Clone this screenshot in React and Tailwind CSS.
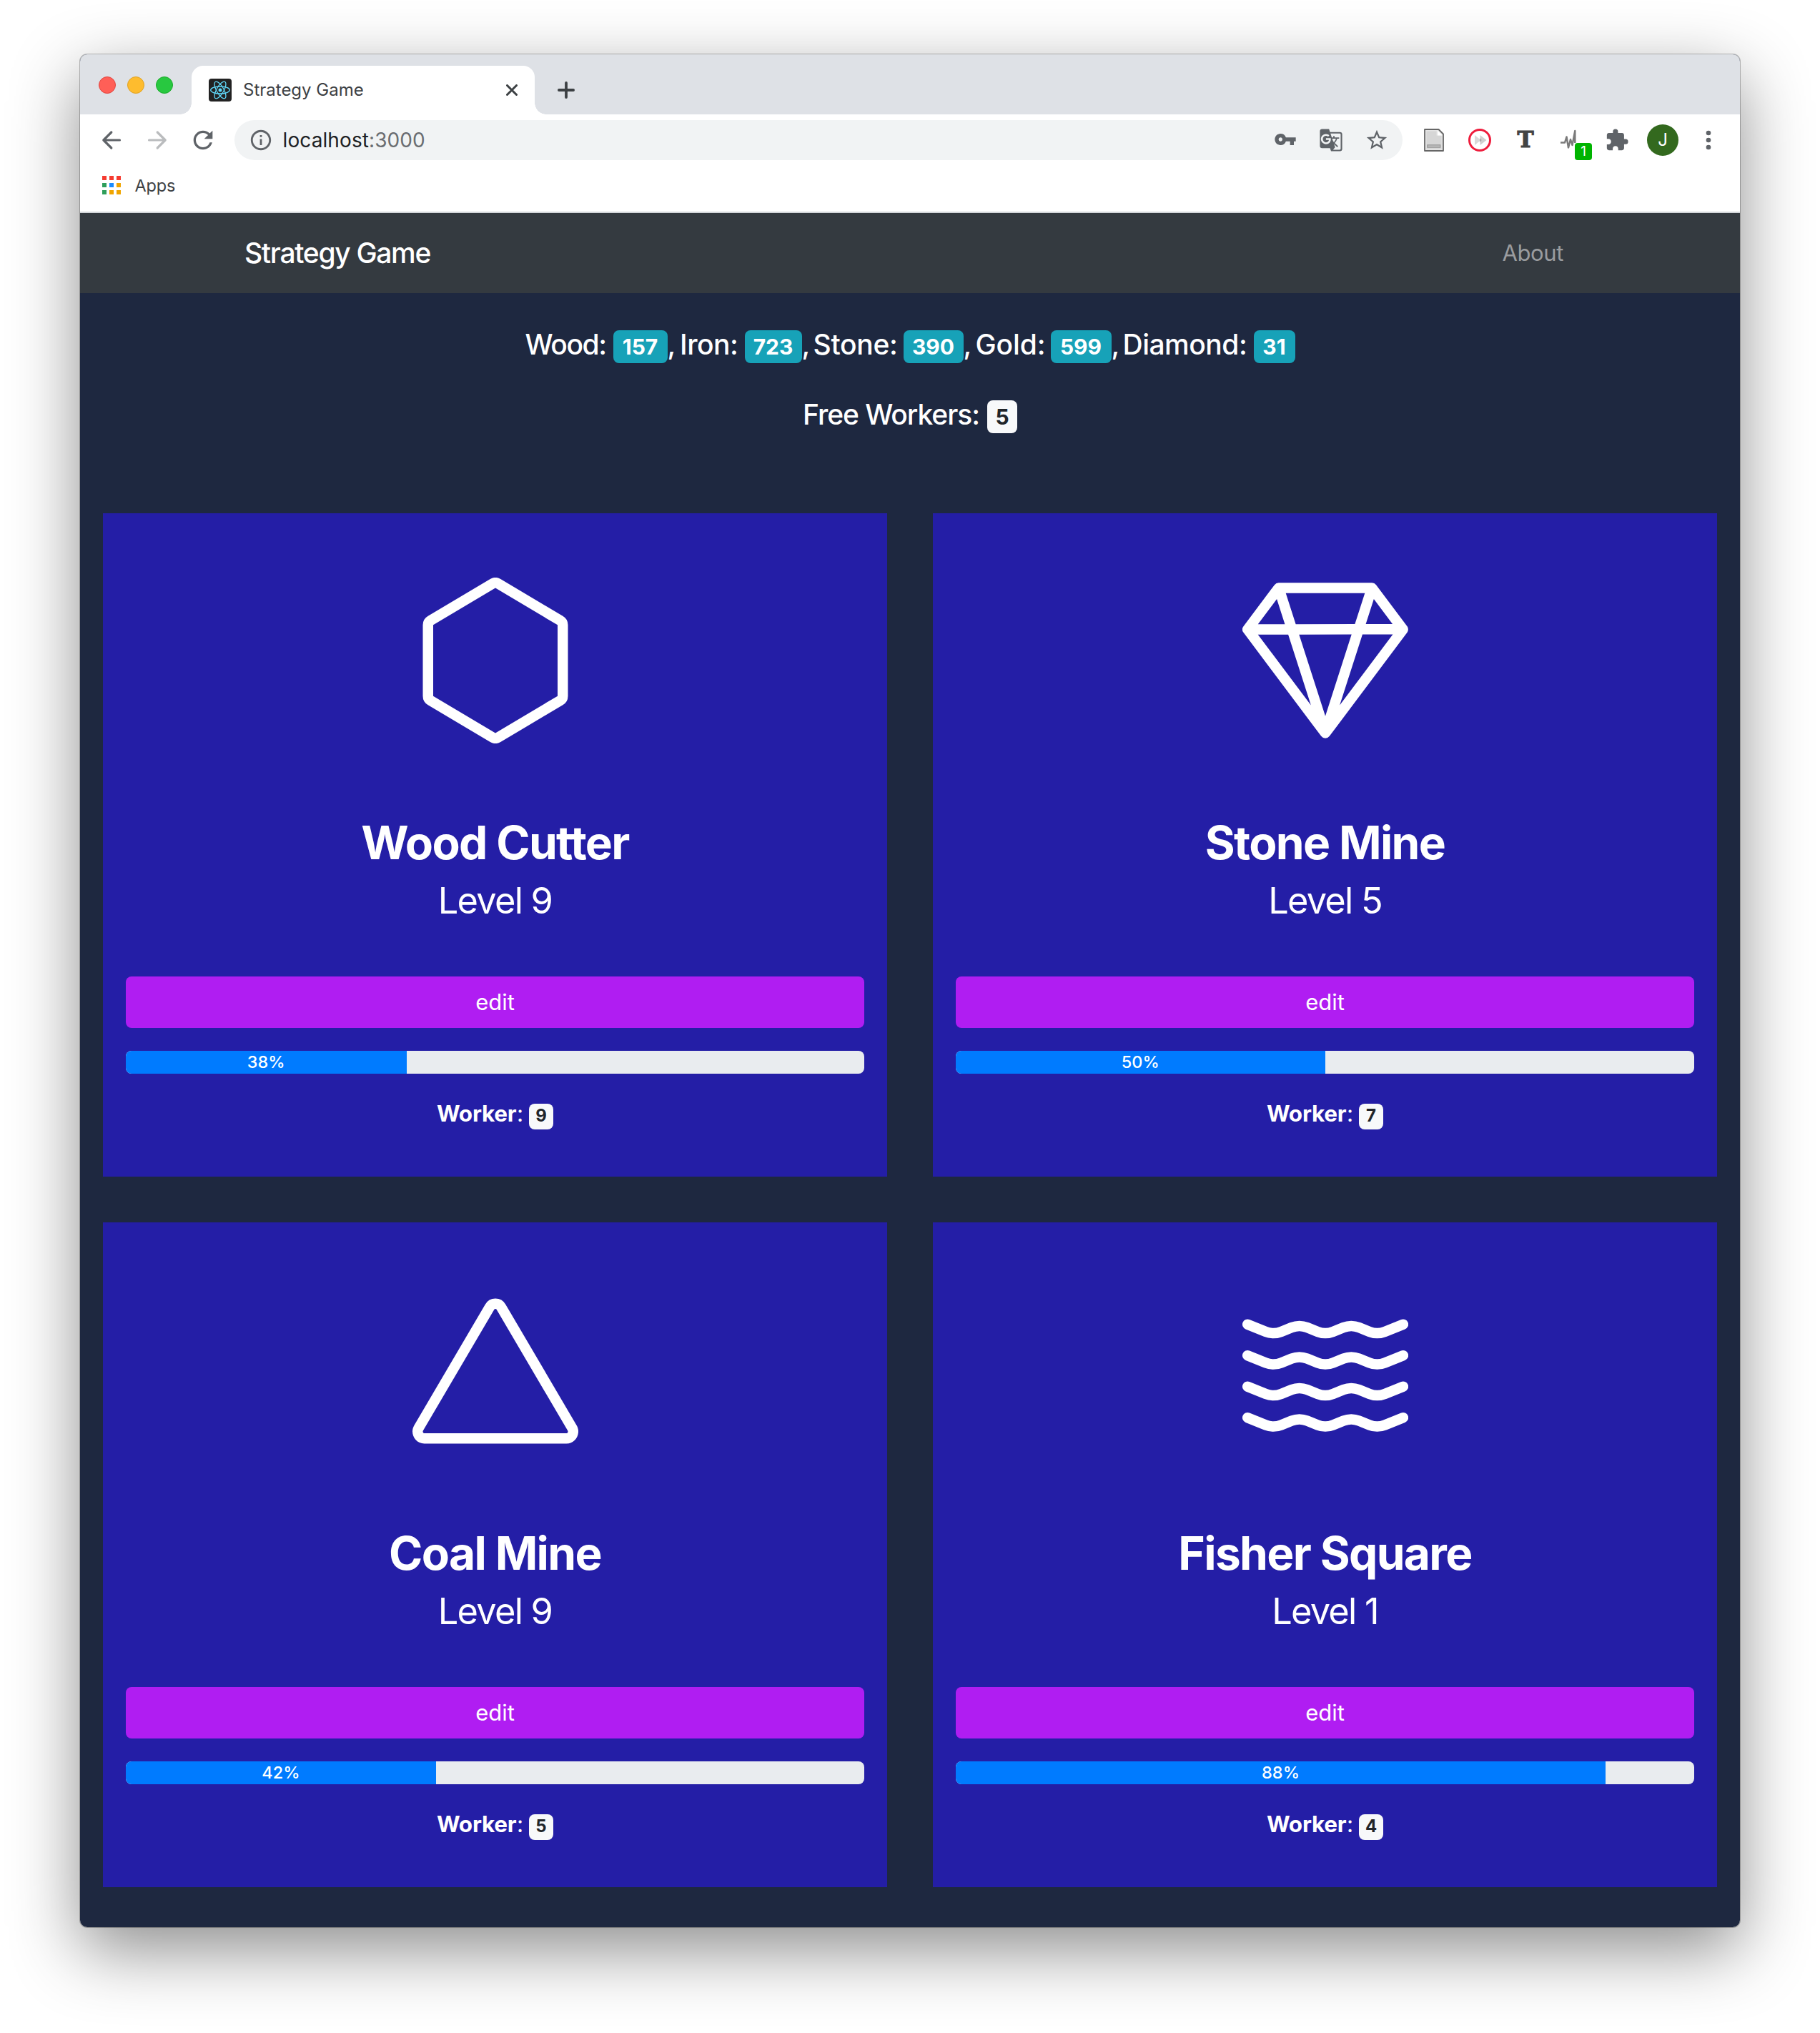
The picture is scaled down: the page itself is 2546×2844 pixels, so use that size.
import React from "react";
import { BsHexagon, BsGem, BsTriangle, BsWater } from "react-icons/bs";
import {
  MdVpnKey,
  MdGTranslate,
  MdStarBorder,
  MdExtension,
  MdRefresh,
  MdInfoOutline,
} from "react-icons/md";

const resources = [
  { label: "Wood:", value: 157, cell: "w-[123px] tracking-[-1.4px]", badge: "w-[76px]", comma: "w-[17.5px]" },
  { label: "Iron:", value: 723, cell: "w-[90.5px] tracking-[-0.5px]", badge: "w-[80px]", comma: "w-[16px]" },
  { label: "Stone:", value: 390, cell: "w-[126px] tracking-[-0.3px]", badge: "w-[84px]", comma: "w-[17px]" },
  { label: "Gold:", value: 599, cell: "w-[105px] tracking-[-0.1px]", badge: "w-[85px]", comma: "w-[16px]" },
  { label: "Diamond:", value: 31, cell: "w-[183px] tracking-[-0.5px]", badge: "w-[58px]", comma: null },
];

const buildings = [
  { name: "Wood Cutter", level: 9, progress: 38, workers: 9, Icon: BsHexagon, pad: "pt-[90px]" },
  { name: "Stone Mine", level: 5, progress: 50, workers: 7, Icon: BsGem, pad: "pt-[90px]" },
  { name: "Coal Mine", level: 9, progress: 42, workers: 5, Icon: BsTriangle, pad: "pt-[92px]" },
  { name: "Fisher Square", level: 1, progress: 88, workers: 4, Icon: BsWater, pad: "pt-[92px]" },
];

function ReactLogo() {
  return (
    <svg viewBox="0 0 32 32" className="size-8">
      <rect width="32" height="32" rx="4" fill="#222" />
      <g fill="none" stroke="#61dafb" strokeWidth="1.3">
        <ellipse cx="16" cy="16" rx="13.3" ry="5" />
        <ellipse cx="16" cy="16" rx="13.3" ry="5" transform="rotate(60 16 16)" />
        <ellipse cx="16" cy="16" rx="13.3" ry="5" transform="rotate(120 16 16)" />
      </g>
      <circle cx="16" cy="16" r="2.5" fill="#61dafb" />
    </svg>
  );
}

function Arrow({ className }) {
  return (
    <svg viewBox="0 0 32 32" className={className} fill="none" stroke="currentColor" strokeWidth="3.2" strokeLinecap="round" strokeLinejoin="round">
      <path d="M27.5 16H5M15.8 5L4.8 16l11 11" />
    </svg>
  );
}

function TabStrip() {
  return (
    <div className="flex h-[84px] items-center bg-[#dee1e6] pl-[26px]">
      <div className="flex gap-4 pt-[2px]">
        <span className="size-6 rounded-full border border-[#e0443e] bg-[#ff5f57]" />
        <span className="size-6 rounded-full border border-[#dea123] bg-[#febc2e]" />
        <span className="size-6 rounded-full border border-[#1aab29] bg-[#28c840]" />
      </div>
      <div className="relative ml-[26px] flex h-[68px] w-[480px] items-center self-end rounded-t-[16px] bg-white px-6">
        <span className="absolute bottom-0 -left-4 size-4 bg-[radial-gradient(circle_at_0_0,transparent_15.5px,#fff_16px)]" />
        <span className="absolute bottom-0 -right-4 size-4 bg-[radial-gradient(circle_at_100%_0,transparent_15.5px,#fff_16px)]" />
        <ReactLogo />
        <span className="ml-4 text-[24px] leading-8 text-[#3c4043]">Strategy Game</span>
        <svg viewBox="0 0 16 16" className="ml-auto size-4" stroke="#3c4043" strokeWidth="3" strokeLinecap="round">
          <path d="M1.5 1.5l13 13M14.5 1.5l-13 13" />
        </svg>
      </div>
      <svg viewBox="0 0 24 24" className="mt-4 ml-8 size-6" stroke="#3c4043" strokeWidth="3.8" strokeLinecap="round">
        <path d="M12 1.9v20.2M1.9 12h20.2" />
      </svg>
    </div>
  );
}

function Extensions() {
  return (
    <div className="ml-3 grid grid-cols-[repeat(7,64px)] place-items-center text-[#5f6368]">
      <svg viewBox="0 0 30 32" className="h-8 w-[30px]">
        <path d="M2 1h19.5L28 7.5V31H2z" fill="#e4e4e4" stroke="#666" strokeWidth="1.8" strokeLinejoin="round" />
        <path d="M4.5 3.5h14v6h7V28.5h-21z" fill="#d6d6d6" />
        <path d="M20 2.5l7 7h-7z" fill="#fff" />
        <rect x="5.8" y="22.8" width="18" height="3.4" fill="#bdbdbd" stroke="#999" strokeWidth="1.2" />
      </svg>
      <svg viewBox="0 0 32 32" className="size-8">
        <circle cx="16" cy="16" r="14.5" fill="#fff" stroke="#ee1c3c" strokeWidth="3" />
        <path d="M9 9l8.5 7L9 23z" fill="#d9d9d9" />
        <path d="M16.5 9l9 7-9 7z" fill="#d0d0d0" />
        <path d="M16 13.3l2.8 2.7-2.8 2.7z" fill="#a8a8a8" />
      </svg>
      <span className="-mt-0.5 font-['DejaVu_Serif',serif] text-[31px] leading-8 font-bold text-[#444] [-webkit-text-stroke:1.2px_#444]">T</span>
      <div className="relative h-8 w-8">
        <svg viewBox="0 0 32 32" className="size-8" fill="none" stroke="#7a7a7a" strokeWidth="2.5" strokeLinejoin="round">
          <path d="M1 19.5h6l2.5-8 2.5 15 3-11.5 2.5 8 3.8-20v17" />
        </svg>
        <span className="absolute top-5 left-[21px] flex h-6 w-6 items-center justify-center rounded-[4px] bg-[#00b400] text-[19px] leading-6 text-white">1</span>
      </div>
      <MdExtension className="size-[34px]" />
      <span className="flex size-11 items-center justify-center rounded-full bg-[#33691e] text-[24px] text-white">J</span>
      <svg viewBox="0 0 8 28" className="h-7 w-2" fill="currentColor">
        <circle cx="4" cy="4" r="3.3" />
        <circle cx="4" cy="14" r="3.3" />
        <circle cx="4" cy="24" r="3.3" />
      </svg>
    </div>
  );
}

function Toolbar() {
  return (
    <div className="flex h-[72px] items-center bg-white pl-7 text-[#5f6368]">
      <Arrow className="size-8" />
      <Arrow className="ml-8 size-8 rotate-180 text-[#babcbe]" />
      <MdRefresh className="-mr-1 ml-7 size-10" />
      <div className="ml-7 flex h-14 w-[1634px] items-center rounded-full bg-[#f1f3f4] pr-[19px] pl-[20px]">
        <MdInfoOutline className="size-[34px]" />
        <span className="ml-[13.5px] text-[28px] leading-9 tracking-[0.1px] text-[#202124]">
          localhost<span className="text-[#6a6d71]">:3000</span>
        </span>
        <div className="ml-auto flex items-center gap-[30px]">
          <MdVpnKey className="-mt-[2px] mr-[1px] ml-[1px] size-8" />
          <MdGTranslate className="size-[34px]" />
          <MdStarBorder className="size-[34px]" />
        </div>
      </div>
      <Extensions />
    </div>
  );
}

function Bookmarks() {
  return (
    <div className="flex h-[66px] items-center border-b-2 border-[#d3d6da] bg-white pb-[10px] pl-[31px]">
      <div className="grid grid-cols-3 gap-[4px]">
        <span className="size-[6px] bg-[#f53b30]" />
        <span className="size-[6px] bg-[#f53b30]" />
        <span className="size-[6px] bg-[#f53b30]" />
        <span className="size-[6px] bg-[#2e9e5b]" />
        <span className="size-[6px] bg-[#1a8cff]" />
        <span className="size-[6px] bg-[#f0a500]" />
        <span className="size-[6px] bg-[#2e9e5b]" />
        <span className="size-[6px] bg-[#f0a500]" />
        <span className="size-[6px] bg-[#f0a500]" />
      </div>
      <span className="ml-[19.5px] pt-px text-[23.5px] leading-8 tracking-[-0.2px] text-[#3c4043]">Apps</span>
    </div>
  );
}

function Building({ name, level, progress, workers, Icon, pad }) {
  return (
    <section className={`flex flex-col items-center bg-[#241ea6] px-8 text-white ${pad}`}>
      <Icon className="size-[232px]" />
      <h2 className="mt-[101px] text-[64px] leading-[76px] font-bold tracking-[-1.65px]">{name}</h2>
      <p className="mt-[13px] text-[50.5px] leading-[60px] tracking-[-1.75px]">Level {level}</p>
      <button className="mt-[76px] h-[72px] w-full rounded-[8px] bg-[#b01df2] pt-px text-[31px]">edit</button>
      <div className="mt-8 h-8 w-full overflow-hidden rounded-[8px] bg-[#e9ecef]">
        <div
          className="flex h-full items-center justify-center bg-[#007bff] text-[23.5px] leading-8 font-medium"
          style={{ width: `${progress}%` }}
        >
          {progress}%
        </div>
      </div>
      <div className="mt-[38px] flex items-baseline text-[31.5px] leading-9">
        <span className="w-[112px] font-bold tracking-[-0.25px]">Worker</span>
        <span className="w-[17px]">:</span>
        <span className="h-9 w-[34px] rounded-[8px] bg-[#f8f9fa] text-center text-[24px] leading-[34px] font-bold text-[#212529]">
          {workers}
        </span>
      </div>
    </section>
  );
}

export default function App() {
  return (
    <div className="h-[2844px] w-[2546px] overflow-hidden bg-white pt-[76px] pl-[112px] font-['Inter',sans-serif]">
      <div className="h-[2620px] w-[2322px] rounded-[10px] shadow-[0_0_0_1px_rgba(0,0,0,0.25),0_32px_96px_rgba(0,0,0,0.45)]">
        <div className="flex h-full flex-col overflow-hidden rounded-[10px] bg-[#1e2840]">
          <TabStrip />
          <Toolbar />
          <Bookmarks />
          <nav className="flex h-[112px] items-center justify-between bg-[#343a40] pr-[247px] pl-[230px]">
            <span className="text-[39px] font-medium tracking-[-1.32px] text-white">Strategy Game</span>
            <span className="pt-px text-[31px] tracking-[-0.37px] text-[#9a9c9f]">About</span>
          </nav>
          <header className="flex flex-col gap-[50px] pt-12 text-[39px] leading-[48px] font-medium whitespace-nowrap text-white">
            <div className="flex h-12 items-baseline justify-center">
              {resources.map((r) => (
                <React.Fragment key={r.label}>
                  <span className={r.cell}>{r.label}</span>
                  <span className={`h-[46px] rounded-[8px] bg-[#17a2b8] text-center text-[30px] leading-[46px] font-bold ${r.badge}`}>
                    {r.value}
                  </span>
                  {r.comma && <span className={r.comma}>,</span>}
                </React.Fragment>
              ))}
            </div>
            <div className="flex h-12 items-baseline justify-center">
              <span className="w-[258px] tracking-[-1.06px]">Free Workers:</span>
              <span className="h-[46px] w-[42px] rounded-[8px] bg-[#f8f9fa] text-center text-[30px] leading-[46px] font-bold text-[#212529]">
                5
              </span>
            </div>
          </header>
          <main className="mt-[114px] grid grid-cols-2 grid-rows-[928px_930px] gap-16 px-8">
            {buildings.map((b) => (
              <Building key={b.name} {...b} />
            ))}
          </main>
        </div>
      </div>
    </div>
  );
}
